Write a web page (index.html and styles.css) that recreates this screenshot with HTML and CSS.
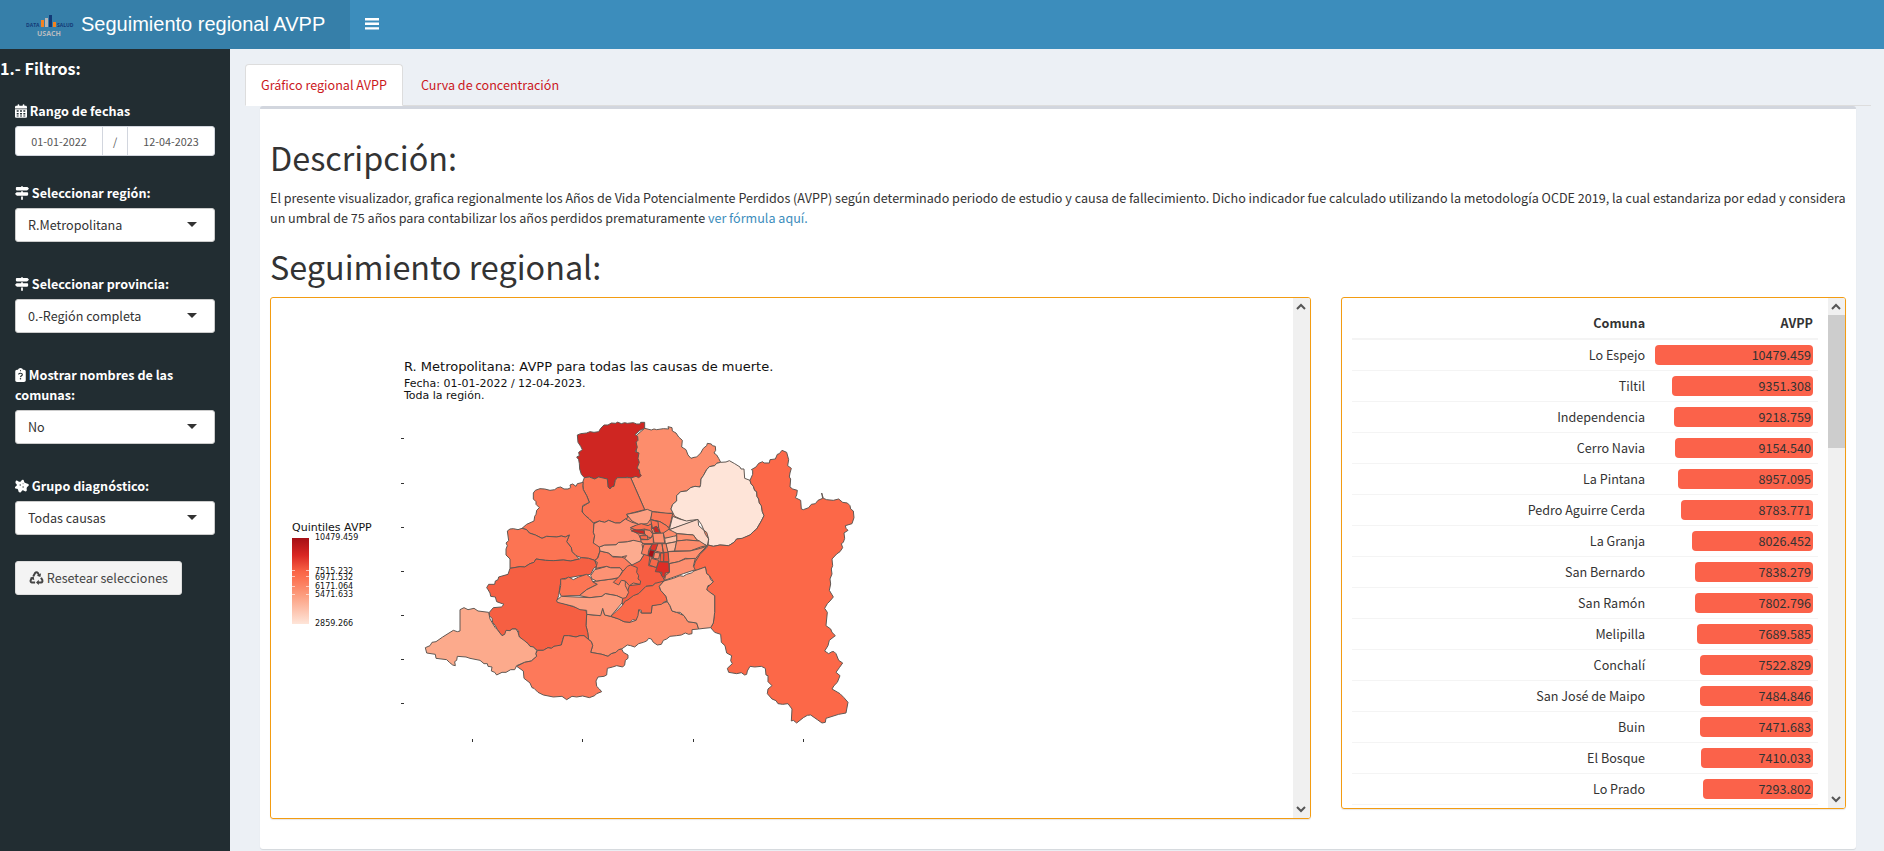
FILE: index.html
```html
<!DOCTYPE html>
<html lang="es">
<head>
<meta charset="utf-8">
<title>Seguimiento regional AVPP</title>
<link rel="stylesheet" href="styles.css">
</head>
<body>
<header class="topbar">
  <a class="brand" href="#">
    <svg class="brand-logo" viewBox="0 0 50 28" aria-hidden="true">
      <rect x="15" y="10" width="3" height="7" fill="#f5821f"/><rect x="19" y="8" width="3" height="9" fill="#b5b5b5"/><rect x="23" y="5" width="3" height="12" fill="#123a78"/><rect x="27" y="12" width="3" height="5" fill="#f5821f"/>
      <text x="0" y="17" font-size="5" fill="#123a78">DATA</text>
      <text x="31" y="17" font-size="5" fill="#123a78">SALUD</text>
      <text x="11" y="26" font-size="7" fill="#b9bcc0">USACH</text>
    </svg>
    <span>Seguimiento regional AVPP</span>
  </a>
  <button class="menu-toggle" type="button" aria-label="Mostrar u ocultar filtros">
    <svg viewBox="0 0 14 12" aria-hidden="true"><path d="M0 0h14v2.400H0zM0 4.600h14V7H0zM0 9.200h14v2.400H0z" fill="#fff"/></svg>
  </button>
</header>

<div class="layout">
  <aside class="sidebar">
    <h4>1.- Filtros:</h4>

    <div class="field field-date">
      <label for="from"><svg class="icon icon-narrow" viewBox="0 0 448 512" aria-hidden="true"><path fill="#fff" d="M96 32V64H48C21.500 64 0 85.500 0 112v48H448V112c0-26.500-21.500-48-48-48H352V32c0-17.700-14.300-32-32-32s-32 14.300-32 32V64H160V32c0-17.700-14.300-32-32-32S96 14.300 96 32zM448 192H0V464c0 26.500 21.500 48 48 48H400c26.500 0 48-21.500 48-48V192z"/><path fill="#222d32" d="M64 232h72v56H64zm124 0h72v56h-72zm124 0h72v56h-72zM64 328h72v56H64zm124 0h72v56h-72zm124 0h72v56h-72zM64 420h72v40H64zm124 0h72v40h-72zm124 0h72v40h-72z"/></svg> Rango de fechas</label>
      <div class="date-range">
        <input id="from" type="text" value="01-01-2022">
        <span>/</span>
        <input type="text" value="12-04-2023" aria-label="Fecha final">
      </div>
    </div>

    <div class="field">
      <label for="region"><svg class="icon" viewBox="0 0 512 512" aria-hidden="true"><path fill="#fff" d="M224 32H64C46.300 32 32 46.300 32 64v64c0 17.700 14.300 32 32 32H442c4.200 0 8.300-1.700 11.300-4.700l48-48c6.200-6.200 6.200-16.400 0-22.600l-48-48c-3-3-7.100-4.700-11.300-4.700H288c0-17.700-14.300-32-32-32s-32 14.300-32 32zM480 256c0-17.700-14.300-32-32-32H288V192H224v32H70c-4.200 0-8.300 1.700-11.300 4.700l-48 48c-6.200 6.200-6.200 16.400 0 22.600l48 48c3 3 7.100 4.700 11.300 4.700H448c17.700 0 32-14.300 32-32V256zM288 480V384H224v96c0 17.700 14.300 32 32 32s32-14.300 32-32z"/></svg> Seleccionar región:</label>
      <div class="select"><select id="region"><option>R.Metropolitana</option></select></div>
    </div>

    <div class="field">
      <label for="province"><svg class="icon" viewBox="0 0 512 512" aria-hidden="true"><path fill="#fff" d="M224 32H64C46.300 32 32 46.300 32 64v64c0 17.700 14.300 32 32 32H442c4.200 0 8.300-1.700 11.300-4.700l48-48c6.200-6.200 6.200-16.400 0-22.600l-48-48c-3-3-7.100-4.700-11.300-4.700H288c0-17.700-14.300-32-32-32s-32 14.300-32 32zM480 256c0-17.700-14.300-32-32-32H288V192H224v32H70c-4.200 0-8.300 1.700-11.300 4.700l-48 48c-6.200 6.200-6.200 16.400 0 22.600l48 48c3 3 7.100 4.700 11.300 4.700H448c17.700 0 32-14.300 32-32V256zM288 480V384H224v96c0 17.700 14.300 32 32 32s32-14.300 32-32z"/></svg> Seleccionar provincia:</label>
      <div class="select"><select id="province"><option>0.-Región completa</option></select></div>
    </div>

    <div class="field">
      <label for="names"><svg class="icon icon-clip" viewBox="0 0 384 512" aria-hidden="true"><path fill="#fff" d="M192 0c-41.800 0-77.400 26.700-90.500 64H64C28.700 64 0 92.700 0 128V448c0 35.300 28.700 64 64 64H320c35.300 0 64-28.700 64-64V128c0-35.300-28.700-64-64-64H282.500C269.400 26.700 233.800 0 192 0z"/><circle cx="192" cy="96" r="20" fill="#222d32"/><path d="M124 238c0-66 136-62 136 6 0 44-60 40-68 88" fill="none" stroke="#222d32" stroke-width="42"/><circle cx="192" cy="396" r="28" fill="#222d32"/></svg> Mostrar nombres de las comunas:</label>
      <div class="select"><select id="names"><option>No</option></select></div>
    </div>

    <div class="field">
      <label for="group"><svg class="icon" viewBox="0 0 512 512" aria-hidden="true"><path fill="#fff" d="M20 98C34 32 82 54 118 82c36 26 76 30 108-12 26-54 94-54 102 6 8 56 38 76 100 86 76 10 104 62 48 106-40 32-58 62-48 108 18 66-30 102-84 62-46-34-78-34-104 12-30 68-112 58-118-16-4-52-28-76-70-76-66-4-70-62-20-94 44-28 44-58 8-88-24-20-26-48-20-78z"/><circle cx="190" cy="220" r="24" fill="#222d32"/><circle cx="294" cy="176" r="18" fill="#222d32"/><circle cx="296" cy="292" r="24" fill="#222d32"/></svg> Grupo diagnóstico:</label>
      <div class="select"><select id="group"><option>Todas causas</option></select></div>
    </div>

    <button class="reset" type="button"><svg class="icon icon-wide" viewBox="0 0 14 14" aria-hidden="true"><g fill="none" stroke="#444" stroke-width="2"><path d="M3.800 5.200 5.600 2Q7 .4 8.400 2l1.100 1.900"/><path d="M11.500 6.800 12.800 9q.7 2.200-1.400 2.600H8.600"/><path d="M5.600 11.600H2.500Q.4 11 1.300 9L2.600 6.800"/></g><path fill="#444" d="M11.600 2.200 10.900 6 7.300 4.700zM9.300 8.800v5.200L6.500 11.500zM.3 6.900 4.200 5.300 4.800 9.300z"/></svg> Resetear selecciones</button>
  </aside>

  <main class="content">
    <nav class="tabs">
      <a class="tab tab-active" href="#grafico">Gráfico regional AVPP</a>
      <a class="tab" href="#curva">Curva de concentración</a>
    </nav>

    <section class="box" id="grafico">
      <h1>Descripción:</h1>
      <p>El presente visualizador, grafica regionalmente los Años de Vida Potencialmente Perdidos (AVPP) según determinado periodo de estudio y causa de fallecimiento. Dicho indicador fue calculado utilizando la metodología OCDE 2019, la cual estandariza por edad y considera un umbral de 75 años para contabilizar los años perdidos prematuramente <a href="#formula">ver fórmula aquí.</a></p>
      <h1>Seguimiento regional:</h1>

      <div class="row">
        <div class="col col-map">
          <div class="panel panel-map">
            <div class="panel-body">
              <svg class="map" viewBox="281 309 600 480" role="img" aria-label="Mapa de AVPP por comuna">
                <defs>
                  <linearGradient id="ramp" x1="0" y1="0" x2="0" y2="1">
                    <stop offset="0" stop-color="#a50f15"/><stop offset=".2" stop-color="#d92723"/><stop offset=".39" stop-color="#f96345"/><stop offset=".46" stop-color="#fc7050"/><stop offset=".66" stop-color="#fc9c7d"/><stop offset="1" stop-color="#fee5d9"/>
                  </linearGradient>
                </defs>
                <text x="404" y="372" font-size="13">R. Metropolitana: AVPP para todas las causas de muerte.</text>
                <text x="404" y="388" font-size="11">Fecha: 01-01-2022 / 12-04-2023.</text>
                <text x="404" y="400" font-size="11">Toda la región.</text>
                <text x="292" y="532" font-size="11">Quintiles AVPP</text>
                <rect x="292" y="539" width="17" height="86" fill="url(#ramp)"/>
                <path d="M292 571.500h3m11 0h3M292 577.500h3m11 0h3M292 587.500h3m11 0h3M292 595.500h3m11 0h3" stroke="#fff" stroke-opacity=".6"/>
                <g font-size="8">
                  <text x="315" y="541">10479.459</text><text x="315" y="575">7515.232</text><text x="315" y="581">6971.532</text><text x="315" y="590">6171.064</text><text x="315" y="598">5471.633</text><text x="315" y="627">2859.266</text>
                </g>
                <path d="M401 439.500h3M401 484.500h3M401 528.500h3M401 572.500h3M401 616.500h3M401 660.500h3M401 704.500h3M472.500 740v3M582.500 740v3M693.500 740v3M803.500 740v3" stroke="#333"/>
                <g transform="translate(540 400) scale(.33333)" stroke="#5f5752" stroke-width="3" stroke-linejoin="round">
                  <path fill="#fc8262" d="M160 372 260 346 318 332 400 342 504 400 504 438 466 488 372 546 300 560 248 600 160 500Z"/>
                  <path fill="#fd8d6c" d="M314 88 334 93 342 90 350 92 370 89 386 90 384 83 396 86 397 96 408 102 416 114 427 124 425 144 438 152 444 168 453 178 462 175 470 174 482 162 490 148 500 140 502 133 514 135 517 140 526 142 527 154 522 162 530 168 536 178 542 190 530 193 524 200 508 203 500 212 490 230 483 240 482 256 480 264 465 262 452 266 440 276 422 278 410 290 410 306 398 316 393 330 400 342 378 344 360 340 340 338 314 332 272 236 290 200 288 110Z"/>
                  <path fill="#cf2622" d="M112 108 122 104 140 102 150 98 162 100 176 98 182 88 192 78 204 78 214 72 228 73 232 69 244 74 254 71 262 73 280 71 290 75 300 75 302 70 314 70 314 88 300 94 285 107 293 112 294 124 288 130 292 145 286 158 297 162 294 178 298 190 291 208 298 212 300 224 304 230 296 236 288 232 270 238 262 234 246 238 232 236 226 244 222 262 216 263 210 270 204 264 202 240 190 238 176 234 164 240 148 234 133 236 124 226 119 210 118 194 116 182 110 174 118 170 116 160 127 152 122 142 114 130Z"/>
                  <path fill="#fee4d8" d="M542 190 558 189 568 185 584 194 600 204 603 210 612 210 614 238 630 244 633 254 640 262 644 274 650 278 651 292 656 300 658 312 664 320 667 338 672 350 664 366 650 390 640 398 630 408 606 420 590 420 582 430 566 440 540 438 520 442 504 438 506 420 500 400 492 394 484 376 474 362 440 368 404 352 393 330 398 316 410 306 410 290 422 278 440 276 452 266 465 262 480 264 482 256 483 240 490 230 500 212 508 203 524 200 530 193Z"/>
                  <path fill="#fc6848" d="M630 244 638 226 638 214 634 212 648 204 656 193 668 188 672 192 688 192 690 182 706 180 712 166 718 164 726 154 740 160 746 182 743 200 754 208 750 222 748 234 752 240 750 264 758 270 772 274 770 288 766 296 782 304 784 330 790 332 806 326 814 316 826 314 834 304 848 298 845 282 850 298 860 302 880 304 896 300 908 310 922 312 930 320 932 330 940 336 942 356 936 374 916 380 918 388 924 394 912 402 914 418 910 430 904 434 908 446 900 458 890 465 876 480 878 500 874 510 876 525 870 540 872 555 868 574 880 594 870 606 862 614 854 628 862 640 858 680 872 690 876 700 886 710 868 724 864 740 854 756 866 764 876 758 882 758 888 764 896 784 908 792 898 806 888 820 900 830 892 850 882 860 876 870 900 884 912 896 924 910 918 942 896 946 858 958 856 970 846 972 832 962 812 948 802 949 790 956 770 972 760 964 754 966 756 930 744 914 728 916 714 914 708 905 696 900 682 884 684 870 696 860 684 848 684 830 678 828 676 808 664 802 644 804 630 802 622 816 620 826 614 828 604 821 590 824 566 820 562 808 577 794 572 785 575 770 560 762 555 740 544 730 542 706 524 700 512 686 520 672 524 640 524 590 502 576 500 568 520 548 508 530 500 524 496 504 488 507 462 516 460 508 466 488 480 466 500 446 504 438 520 442 540 438 566 440 582 430 590 420 606 418 630 408 640 398 650 390 664 366 672 350 667 338 664 320 658 312 656 300 651 292 650 278 644 274 640 262 633 254Z"/>
                  <path fill="#fd8d6c" d="M140 646 180 650 188 628 194 648 212 652 236 660 252 668 270 670 288 664 290 656 296 632 304 642 334 642 336 620 364 614 382 608 390 620 396 636 410 640 432 650 444 668 470 672 476 690 456 692 456 704 446 706 436 702 424 708 410 710 390 712 380 720 370 724 364 736 352 738 340 730 334 720 326 718 320 726 310 730 296 734 284 744 272 740 262 738 245 750 236 752 228 760 214 764 204 772 186 766 152 760 158 740 154 728 146 722 143 700 138 680Z"/>
                  <path fill="#f65d42" d="M262 500 300 486 316 460 330 470 326 500 350 505 366 530 374 545 356 554 346 553 338 560 318 562 296 584 262 604 248 618 244 596 262 580 268 560 300 556Z"/>
                  <path fill="#fb6a4a" d="M212 652 230 636 248 618 256 606 262 604 280 590 296 584 318 562 338 560 346 553 372 546 358 562 362 574 378 592 382 608 374 607 364 616 336 620 334 642 304 642 304 634 296 632 294 650 288 664 278 662 270 670 252 668 236 660Z"/>
                  <path fill="#fdaa8d" d="M496 504 500 524 508 530 512 542 520 548 510 558 504 560 500 572 510 580 524 590 524 640 520 672 512 686 492 688 476 690 470 672 444 668 432 650 420 640 410 640 396 636 390 620 382 608 378 592 362 574 358 562 372 546 400 538 420 530 430 532 440 526 454 522 462 516 488 507Z"/>
                  <path fill="#fc7554" d="M133 236 148 234 164 240 176 234 202 240 204 264 210 270 216 263 222 262 226 244 232 236 272 236 314 332 260 346 264 356 256 360 240 372 226 372 206 364 194 370 178 366 160 372 148 360 128 342 126 324 148 310 140 290 130 272 128 250Z"/>
                  <path fill="#fc7554" d="M-20 282-14 274 0 269 14 270 30 274 44 272 52 266 62 264 72 270 84 270 92 266 90 258 98 255 108 262 112 254 130 250 128 260 130 272 140 290 148 310 128 320 126 338 136 350 148 360 162 374 160 400 164 410 160 432 172 436 180 442 180 456 172 478 164 484 146 478 124 476 108 470 96 458 94 446 80 428 88 408 76 414 64 411 50 414 20 412 6 418-14 408-32 402-40 392-54 388-40 376-18 366-16 352-12 346-10 334-2 326-12 316-12 308-20 300Z"/>
                  <path fill="#fc7453" d="M-98 396-90 390-80 389-66 392-54 388-40 392-32 402-14 408 6 418 20 412 50 414 64 411 76 414 88 408 80 428 94 446 96 458 108 470 118 480 92 486 70 483 40 485 16 484-12 480-18 490-30 494-46 504-60 503-90 508-90 480-102 468-102 450-98 440-102 432-94 425Z"/>
                  <path fill="#f65f42" d="M-90 508-60 503-46 504-30 494-18 490-12 480 16 484 40 485 70 483 92 486 118 480 124 476 146 478 164 484 170 500 160 510 152 526 120 530 66 540 60 560 56 590 50 606 90 620 138 634 140 646 138 680 143 700 146 722 132 710 120 710 108 714 86 710 72 710 68 722 64 738 52 742 42 742 34 748 24 746 10 754-8 754-20 744-30 742-36 734-48 726-64 710-64 696-72 690-84 690-90 695-100 696-104 706-114 710-128 692-134 680-142 670-144 658-152 650-152 640-140 626-116 624-108 616-130 608-134 594-148 592-150 582-156 572-160 566-154 556-136 556-134 546-126 542-124 534-96 526Z"/>
                  <path fill="#fcaa8c" d="M-240 632-228 626-216 632-198 628-186 636-154 640-150 660-135 685-128 692-114 710-106 706-102 694-90 695-84 690-72 690-66 700-62 714-48 724-36 734-30 742-20 744-10 754-12 764-10 772-26 786-46 790-70 800-76 812-88 812-102 820-114 820-130 828-136 820-146 816-144 804-156 802-158 794-168 794-180 784-210 778-222 774-248 772-250 784-256 788-254 800-262 798-272 790-280 782-312 778-314 766-340 762-344 746-330 740-324 730-312 728-292 714-260 694-248 698-240 696Z"/>
                  <path fill="#fd795a" d="M-70 802-46 790-26 786-10 772-12 764-8 754 10 754 24 746 34 748 42 742 64 738 72 710 86 710 108 714 120 710 132 710 146 722 154 728 158 740 152 760 186 766 204 772 214 764 228 760 236 752 245 750 250 760 264 768 264 778 256 784 254 798 248 804 230 800 218 804 202 808 200 828 192 832 174 834 168 846 170 862 178 870 185 878 170 884 164 890 148 896 128 891 110 894 96 892 80 902 66 892 40 894 10 888-6 880-18 868-24 866-30 852-48 838-50 816Z"/>
                  <path fill="#fc7554" d="M62 540 76 540 86 534 100 542 116 534 140 526 152 536 158 548 172 556 140 572 118 590 90 590 64 592 58 580 62 560Z"/>
                  <path fill="#fd8c6c" d="M118 590 140 572 172 556 158 548 216 540 236 538 256 546 256 560 266 580 258 596 248 598 230 590 196 584 186 592 150 596Z"/>
                  <path fill="#fca082" d="M50 604 64 592 150 596 186 592 196 584 230 590 248 598 246 612 212 652 194 648 188 628 182 650 140 646 140 634 120 632 100 622 52 610Z"/>
                  <path fill="#fd9274" d="M152 530 164 512 180 508 200 502 212 506 240 506 248 516 236 536 216 540 170 546 156 540Z"/>
                  <path fill="#fc7c5e" d="M180 456 206 462 218 474 244 474 254 478 276 498 248 516 240 506 212 506 200 502 168 508 172 490 164 486 174 476Z"/>
                  <path fill="#fc7050" d="M220 550 240 530 248 518 262 502 272 498 292 506 290 520 296 530 294 540 302 546 300 556 280 552 268 560 256 546 244 544 236 558Z"/>
                  <path fill="#fcab8f" d="M178 444 194 438 228 437 236 430 262 428 280 424 312 426 306 436 310 456 316 460 300 486 276 498 254 478 260 470 244 474 218 472 206 462 180 456Z"/>
                  <path fill="#fd8f72" d="M162 374 178 366 194 370 206 364 226 372 240 372 256 360 276 370 300 376 276 384 272 392 296 406 302 420 308 430 280 424 262 428 236 430 228 437 194 438 178 444 160 432 164 410 160 400Z"/>
                  <path fill="#fca083" d="M260 346 290 340 322 331 338 338 332 360 322 374 296 376 276 366Z"/>
                  <g transform="translate(90 240)">
                    <path fill="#fb7858" d="M246 98 262 100 308 104 304 122 298 146 270 128 242 122Z"/>
                    <path fill="#fc7050" d="M181 146 200 138 214 134 234 140 245 134 244 150 250 164 240 156 224 150 200 154Z"/>
                    <path fill="#fc8262" d="M222 152 240 154 248 165 244 176 232 174 224 164Z"/>
                    <path fill="#fb6a4a" d="M210 170 232 170 234 182 212 180Z"/>
                    <path fill="#fd8464" d="M212 182 234 182 244 176 250 168 250 194 222 194 214 190Z"/>
                    <path fill="#cf2622" d="M184 156 190 152 222 154 224 166 204 162Z"/>
                    <path fill="#fd7858" d="M242 122 270 128 290 140 300 152 284 162 272 164 266 146Z"/>
                    <path fill="#fc6f4f" d="M242 122 264 128 266 146 254 144 248 150Z"/>
                    <path fill="#cf2622" d="M250 146 260 142 271 162 254 160Z"/>
                    <path fill="#fd9070" d="M248 164 280 162 284 192 252 192Z"/>
                    <path fill="#fd8c6c" d="M280 162 298 150 318 160 320 170 310 174 284 178Z"/>
                    <path fill="#fee0d4" d="M308 112 328 120 350 126 360 124 384 122 340 138 298 152Z"/>
                    <path fill="#fdd6c6" d="M298 152 384 121 386 140 402 154 406 166 416 180 412 200 396 194 380 182 370 168 322 164Z"/>
                    <path fill="#fd9070" d="M320 164 370 168 380 182 388 186 350 183 320 186Z"/>
                    <path fill="#fdbfa6" d="M284 178 310 172 320 170 320 188 286 194Z"/>
                    <path fill="#fcb398" d="M288 194 320 188 314 216 292 218Z"/>
                    <path fill="#fd8c6c" d="M320 186 350 183 388 186 410 200 392 204 360 216 314 216Z"/>
                    <path fill="#fd9070" d="M294 218 360 216 392 208 410 202 390 222 376 240 346 238 326 248 296 254Z"/>
                    <path fill="#fd8f70" d="M298 254 326 248 346 240 376 238 370 262 376 272 340 284 284 304 286 290 298 280Z"/>
                    <path fill="#fc7c5e" d="M222 196 246 196 236 214 234 230 214 224Z"/>
                    <path fill="#fc8262" d="M262 194 276 194 280 222 256 216ZM276 194 288 194 294 220 280 222Z"/>
                    <path fill="#e0342a" d="M246 196 264 194 256 216 240 212Z"/>
                    <path fill="#a50f15" d="M240 212 254 216 248 236 234 230Z"/>
                    <path fill="#fc8a6a" d="M254 220 270 222 266 240 250 238Z"/>
                    <path fill="#f25a3e" d="M272 222 282 222 281 248 270 248Z"/>
                    <path fill="#ee5038" d="M282 220 294 220 297 248 281 248Z"/>
                    <path fill="#f6684a" d="M244 238 266 244 260 266 238 258Z"/>
                    <path fill="#de2d26" d="M266 248 296 250 298 280 286 282 284 296 274 290 276 280 256 278Z"/>
                  </g>
                </g>
              </svg>
            </div>
            <div class="scroll">
              <svg viewBox="0 0 10 7" aria-hidden="true"><path d="m1 6 4-4 4 4"/></svg>
              <svg viewBox="0 0 10 7" aria-hidden="true"><path d="m1 1 4 4 4-4"/></svg>
            </div>
          </div>
        </div>

        <div class="col col-table">
          <div class="panel panel-table">
            <div class="panel-body">
              <table>
                <thead><tr><th scope="col" class="name">Comuna</th><th scope="col">AVPP</th></tr></thead>
                <tbody>
                  <tr><td>Lo Espejo</td><td><span class="bar" style="width:100%">10479.459</span></td></tr>
                  <tr><td>Tiltil</td><td><span class="bar" style="width:89.23%">9351.308</span></td></tr>
                  <tr><td>Independencia</td><td><span class="bar" style="width:87.97%">9218.759</span></td></tr>
                  <tr><td>Cerro Navia</td><td><span class="bar" style="width:87.36%">9154.540</span></td></tr>
                  <tr><td>La Pintana</td><td><span class="bar" style="width:85.47%">8957.095</span></td></tr>
                  <tr><td>Pedro Aguirre Cerda</td><td><span class="bar" style="width:83.82%">8783.771</span></td></tr>
                  <tr><td>La Granja</td><td><span class="bar" style="width:76.59%">8026.452</span></td></tr>
                  <tr><td>San Bernardo</td><td><span class="bar" style="width:74.80%">7838.279</span></td></tr>
                  <tr><td>San Ramón</td><td><span class="bar" style="width:74.46%">7802.796</span></td></tr>
                  <tr><td>Melipilla</td><td><span class="bar" style="width:73.38%">7689.585</span></td></tr>
                  <tr><td>Conchalí</td><td><span class="bar" style="width:71.79%">7522.829</span></td></tr>
                  <tr><td>San José de Maipo</td><td><span class="bar" style="width:71.42%">7484.846</span></td></tr>
                  <tr><td>Buin</td><td><span class="bar" style="width:71.30%">7471.683</span></td></tr>
                  <tr><td>El Bosque</td><td><span class="bar" style="width:70.71%">7410.033</span></td></tr>
                  <tr><td>Lo Prado</td><td><span class="bar" style="width:69.60%">7293.802</span></td></tr>
                </tbody>
              </table>
            </div>
            <div class="scroll">
              <svg viewBox="0 0 10 7" aria-hidden="true"><path d="m1 6 4-4 4 4"/></svg>
              <div class="thumb"></div>
              <svg viewBox="0 0 10 7" aria-hidden="true"><path d="m1 1 4 4 4-4"/></svg>
            </div>
          </div>
        </div>
      </div>
    </section>
  </main>
</div>
</body>
</html>
```
FILE: styles.css
```css
* { box-sizing: border-box; }

body {
  margin: 0;
  min-height: 100vh;
  display: flex;
  flex-direction: column;
  background: #ecf0f5;
  color: #333;
  font-family: "Source Sans Pro", "Noto Sans CJK SC", sans-serif;
  font-size: 14px;
  font-size-adjust: 0.488;
  line-height: 20px;
}

input, select, button { font: inherit; font-size-adjust: inherit; color: inherit; }
a { color: #3c8dbc; text-decoration: none; }

/* Header */
.topbar { display: flex; height: 49px; background: #3c8dbc; }
.brand {
  width: 350px;
  display: flex;
  align-items: center;
  gap: 5px;
  padding: 0 0 2px 26px;
  background: #367fa9;
  color: #fff;
  font-family: "Liberation Sans", Arial, sans-serif;
  font-size: 20px;
  font-size-adjust: none;
  white-space: nowrap;
}
.brand-logo { width: 50px; height: 28px; font-family: "Open Sans", sans-serif; font-weight: 700; }
.menu-toggle { display: flex; align-items: center; padding: 0 15px 2px; border: 0; background: none; }
.menu-toggle svg { width: 14px; height: 12px; }

/* Layout */
.layout { flex: 1; display: flex; }
.sidebar { width: 230px; flex: none; background: #222d32; color: #fff; }
.content { flex: 1; min-width: 0; padding: 15px 13px 0 15px; }

/* Sidebar */
.sidebar h4 { margin: 9px 0 11px; font-size: 18px; font-weight: 700; line-height: 20px; }
.field { padding: 12px 15px 0; margin-bottom: 20px; }
.field-date { margin-bottom: 15px; }
.field label { display: block; margin-bottom: 5px; font-weight: 700; }
.icon { width: 14px; height: 14px; vertical-align: -2px; }
.icon-narrow { width: 12px; }
.icon-clip { width: 11px; }
.icon-wide { width: 15px; }

.date-range {
  display: flex;
  height: 30px;
  border: 1px solid #d2d6de;
  border-radius: 3px;
  background: #fff;
  color: #555;
  font-size: 12px;
  line-height: 28px;
}
.date-range input {
  flex: 1;
  min-width: 0;
  padding: 0;
  border: 0;
  background: none;
  text-align: center;
}
.date-range span { width: 26px; border: solid #d2d6de; border-width: 0 1px; text-align: center; }

.select { position: relative; }
.select::after {
  content: "";
  position: absolute;
  right: 18px;
  top: 14px;
  border: 5px solid transparent;
  border-top-color: #333;
  border-bottom: 0;
  pointer-events: none;
}
.select select {
  display: block;
  width: 100%;
  height: 34px;
  padding: 0 30px 0 12px;
  border: 1px solid #ccc;
  border-radius: 3px;
  background: #fff;
  appearance: none;
  color: #333;
}
.reset {
  height: 34px;
  margin: 6px 15px 0;
  padding: 0 13px;
  border: 1px solid #ddd;
  border-radius: 3px;
  background: #f4f4f4;
  color: #444;
}

/* Tabs */
.tabs { display: flex; gap: 2px; border-bottom: 1px solid #ddd; }
.tab {
  margin-bottom: -1px;
  padding: 10px 15px;
  border: 1px solid transparent;
  border-radius: 4px 4px 0 0;
  color: #cb181d;
}
.tab-active { border-color: #ddd #ddd #fff; background: #fff; }

/* Main box */
.box {
  margin: 0 15px;
  padding: 10px 10px 30px;
  border-top: 3px solid #d2d6de;
  border-radius: 3px;
  background: #fff;
  box-shadow: 0 1px 1px rgba(0, 0, 0, .1);
}
h1 { margin: 18px 0 11px; font-size: 36px; font-weight: 400; line-height: 40px; }
p { margin: 0 0 10px; }

.row { display: flex; margin: 0 -15px; align-items: flex-start; }
.col { padding: 0 15px; }
.col-map { width: 66.6667%; }
.col-table { width: 33.3333%; }
.panel { display: flex; border: 1px solid #f39c12; border-radius: 3px; overflow: hidden; box-shadow: 0 1px 1px rgba(0, 0, 0, .1); }
.panel-map { height: 522px; }
.panel-table { height: 512px; }
.panel-body { flex: 1; min-width: 0; padding: 10px; }

.scroll {
  width: 17px;
  flex: none;
  display: flex;
  flex-direction: column;
  align-items: center;
  justify-content: space-between;
  padding: 5px 0;
  background: #f0f0f0;
}
.scroll svg { width: 10px; height: 7px; }
.scroll path { fill: none; stroke: #555; stroke-width: 2; }
.thumb { width: 100%; height: 133px; margin: 5px 0 auto; background: #cdcdcd; }

.map { display: block; width: 600px; height: 480px; font-family: "DejaVu Sans", sans-serif; font-size-adjust: none; fill: #111; }

/* Table */
table { width: 100%; border-collapse: separate; border-spacing: 0; text-align: right; table-layout: fixed; }
th, td { padding: 5px; border-bottom: 1px solid #f4f4f4; }
th { border-bottom-width: 2px; font-weight: 700; }
.name { width: 64%; }
.bar { display: block; margin-left: auto; padding-right: 2px; border-radius: 4px; background: #fb624a; }
```
